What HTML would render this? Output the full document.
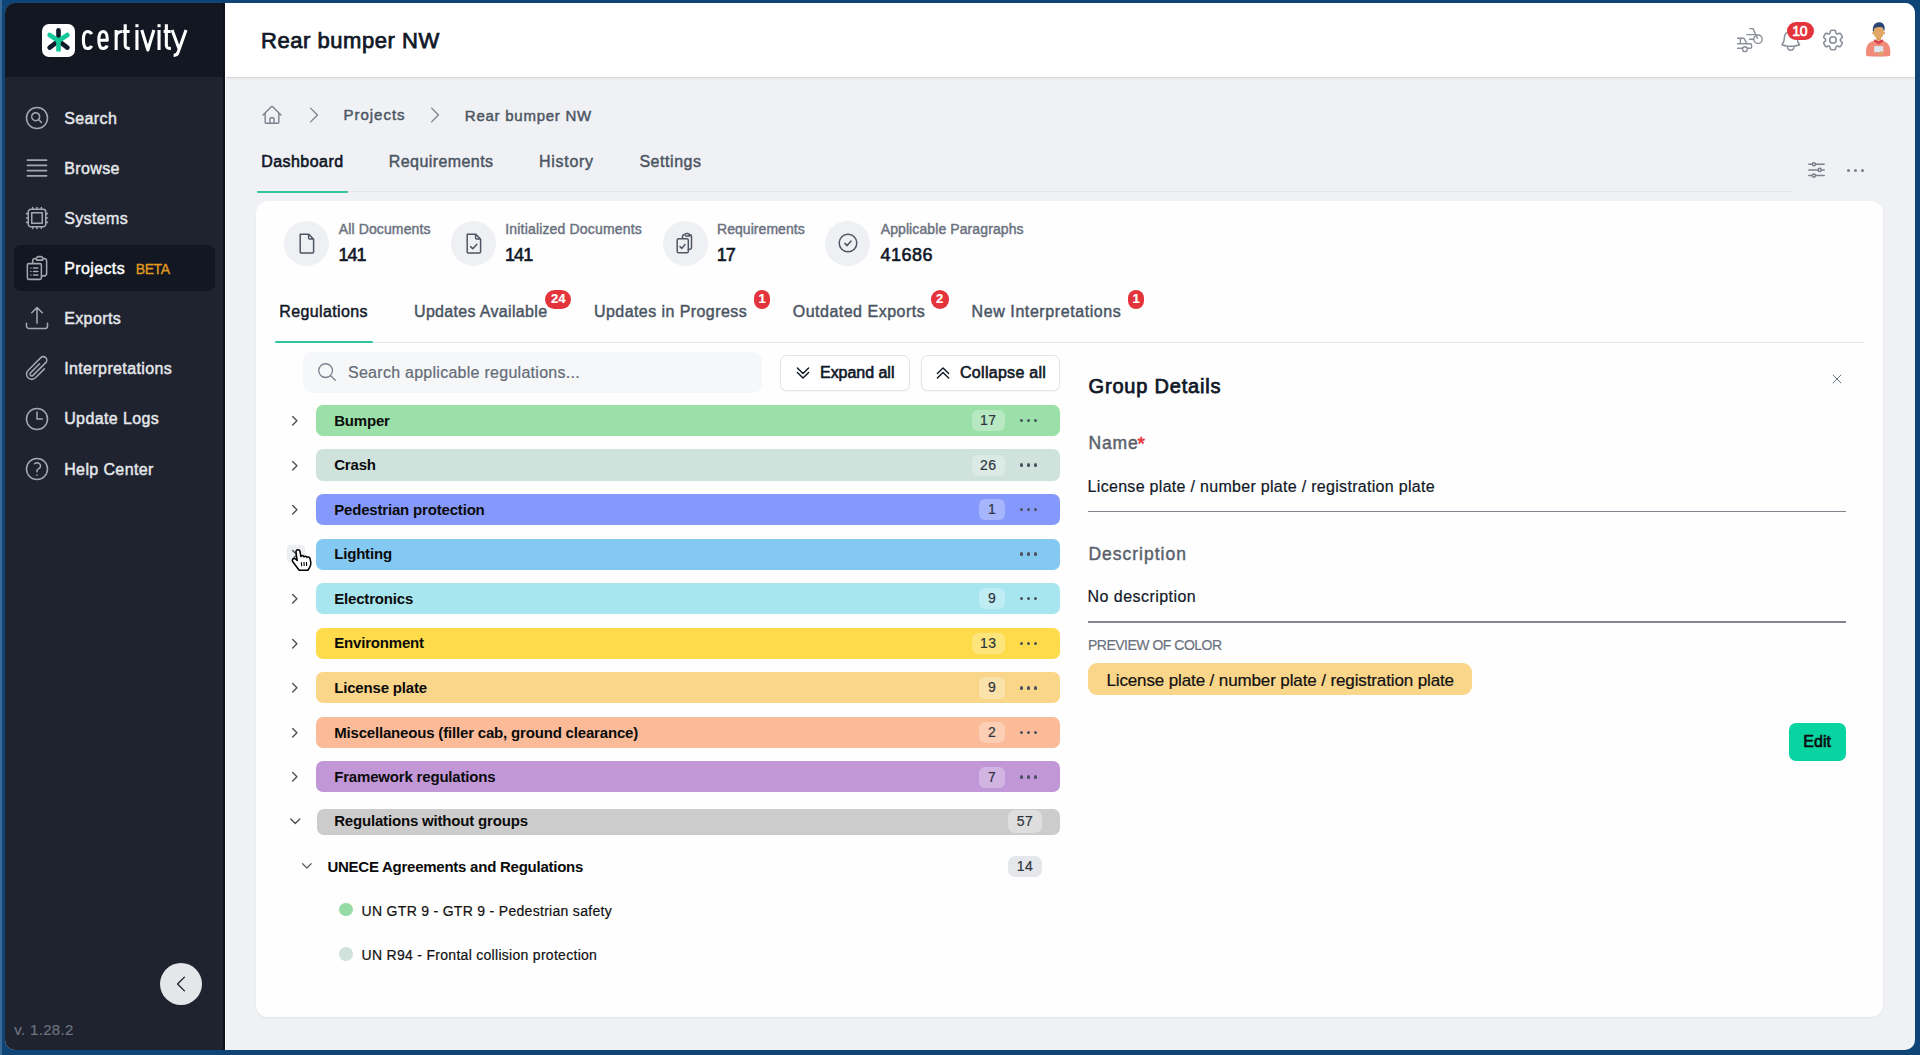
<!DOCTYPE html><html><head><meta charset="utf-8"><title>certivity</title><style>
html,body{margin:0;padding:0;}
body{width:1920px;height:1055px;overflow:hidden;position:relative;background:#0e4576;font-family:"Liberation Sans",sans-serif;}
.t{position:absolute;white-space:nowrap;line-height:1;-webkit-text-stroke:0.2px currentColor;}
.r{position:absolute;}
#win{position:absolute;left:0;top:0;width:1920px;height:1055px;clip-path:inset(3px 5px 5px 5px round 10px);background:#f0f1f4;}
</style></head><body>
<div class="r" style="left:0.0px;top:0.0px;width:1.5px;height:1055.0px;background:#3a6b98;border-radius:0px;"></div>
<div id="win">
<div class="r" style="left:5.0px;top:3.0px;width:220.0px;height:1047.0px;background:#1e232f;border-radius:0px;"></div>
<div class="r" style="left:5.0px;top:3.0px;width:220.0px;height:73.8px;background:#121721;border-radius:0px;"></div>
<div class="r" style="left:223.3px;top:3.0px;width:1.7px;height:1047.0px;background:#0d111a;border-radius:0px;"></div>
<div class="r" style="left:225.0px;top:77.0px;width:1.0px;height:973.0px;background:#ffffff;border-radius:0px;"></div>
<div class="r" style="left:42.0px;top:24.0px;width:33.0px;height:32.5px;background:#ffffff;border-radius:7px;"></div>
<svg class="r" style="left:42.0px;top:24.0px;width:33px;height:32.5px;" viewBox="0 0 33 32.5">
<g stroke-linecap="round" stroke-width="4.6">
<line x1="16.5" y1="16.8" x2="16.5" y2="6.2" stroke="#0f1c2b"/>
<line x1="16.5" y1="16.8" x2="7.6" y2="23.6" stroke="#0f1c2b"/>
<line x1="16.5" y1="16.8" x2="25.4" y2="23.6" stroke="#0f1c2b"/>
<line x1="16.5" y1="16.8" x2="7.6" y2="11.0" stroke="#12c99a"/>
<line x1="16.5" y1="16.8" x2="25.4" y2="11.0" stroke="#12c99a"/>
<line x1="16.5" y1="16.8" x2="16.5" y2="27.5" stroke="#12c99a" stroke-linecap="butt"/>
</g></svg>
<svg class="r" style="left:75.0px;top:20.0px;width:120px;height:40px;" viewBox="75 20 120 40"><g fill="none" stroke="#ffffff" stroke-width="3.1" stroke-linecap="butt" stroke-linejoin="round">
<path d="M91.6 34.2 C90.8 32.2 89.4 31.55 87.4 31.55 C84.3 31.55 83.4 34 83.4 40 C83.4 46 84.3 48.45 87.4 48.45 C89.4 48.45 90.8 47.8 91.6 45.8"/>
<path d="M98.85 40.3 H107.25 V39.5 C107.25 33.8 106 31.55 103.05 31.55 C100.1 31.55 98.85 33.8 98.85 40 C98.85 46.2 100.1 48.45 103.05 48.45 C105.2 48.45 106.5 47.6 107.2 45.6"/>
<path d="M116.15 30 V50 M116.15 36.5 C116.6 33 118.3 31.55 122.1 31.55"/>
<path d="M125.2 24.2 V45 C125.2 47.6 126.3 48.45 129.8 48.45 M122.5 31.55 H129.6"/>
<path d="M136.95 30 V50"/>
<path d="M141.8 30 L147.85 50 L153.9 30"/>
<path d="M159.05 30 V50"/>
<path d="M166.35 24.2 V45 C166.35 47.6 167.45 48.45 170.9 48.45 M163.6 31.55 H170.7"/>
<path d="M172.1 30 L179.2 49.2 M186.0 30 L178.0 52.6 C177.2 54.9 176.1 55.5 173.6 55.4"/>
</g>
<rect x="135.4" y="24.2" width="3.1" height="3" fill="#fff"/>
<rect x="157.5" y="24.2" width="3.1" height="3" fill="#fff"/></svg>
<div class="r" style="left:14.2px;top:245.3px;width:200.8px;height:45.7px;background:#121722;border-radius:7px;"></div>
<svg class="r" style="left:23.2px;top:103.6px;width:28px;height:28px;" viewBox="0 0 24 24"><path d="m15.75 15.75-2.489-2.489m0 0a3.375 3.375 0 1 0-4.773-4.773 3.375 3.375 0 0 0 4.774 4.774ZM21 12a9 9 0 1 1-18 0 9 9 0 0 1 18 0Z" fill="none" stroke="#a3a7b0" stroke-width="1.3" stroke-linecap="round" stroke-linejoin="round"/></svg>
<div class="t" style="left:64.2px;top:111.0px;font-size:16px;color:#e5e7eb;font-weight:normal;letter-spacing:0.38px;-webkit-text-stroke:0.45px #e5e7eb;">Search</div>
<svg class="r" style="left:23.2px;top:153.8px;width:28px;height:28px;" viewBox="0 0 24 24"><path d="M3.75 5.25h16.5m-16.5 4.5h16.5m-16.5 4.5h16.5m-16.5 4.5h16.5" fill="none" stroke="#a3a7b0" stroke-width="1.3" stroke-linecap="round" stroke-linejoin="round"/></svg>
<div class="t" style="left:64.2px;top:161.0px;font-size:16px;color:#e5e7eb;font-weight:normal;letter-spacing:0.38px;-webkit-text-stroke:0.45px #e5e7eb;">Browse</div>
<svg class="r" style="left:23.2px;top:203.9px;width:28px;height:28px;" viewBox="0 0 24 24"><path d="M8.25 3v1.5M4.5 8.25H3m18 0h-1.5M4.5 12H3m18 0h-1.5m-15 3.75H3m18 0h-1.5M8.25 19.5V21M12 3v1.5m0 15V21m3.75-18v1.5m0 15V21m-9-1.5h10.5a2.25 2.25 0 0 0 2.25-2.25V6.75a2.25 2.25 0 0 0-2.25-2.25H6.75A2.25 2.25 0 0 0 4.5 6.75v10.5a2.25 2.25 0 0 0 2.25 2.25Zm.75-12h9v9h-9v-9Z" fill="none" stroke="#a3a7b0" stroke-width="1.3" stroke-linecap="round" stroke-linejoin="round"/></svg>
<div class="t" style="left:64.2px;top:211.0px;font-size:16px;color:#e5e7eb;font-weight:normal;letter-spacing:0.38px;-webkit-text-stroke:0.45px #e5e7eb;">Systems</div>
<svg class="r" style="left:23.2px;top:254.0px;width:28px;height:28px;" viewBox="0 0 24 24"><path d="M9 12h3.75M9 15h3.75M9 18h3.75m3 .75H18a2.25 2.25 0 0 0 2.25-2.25V6.108c0-1.135-.845-2.098-1.976-2.192a48.424 48.424 0 0 0-1.123-.08m-5.801 0c-.065.21-.1.433-.1.664 0 .414.336.75.75.75h4.5a.75.75 0 0 0 .75-.75 2.25 2.25 0 0 0-.1-.664m-5.8 0A2.251 2.251 0 0 1 13.5 2.25H15c1.012 0 1.867.668 2.15 1.586m-5.8 0c-.376.023-.75.05-1.124.08C9.095 4.01 8.25 4.973 8.25 6.108V8.25m0 0H4.875c-.621 0-1.125.504-1.125 1.125v11.25c0 .621.504 1.125 1.125 1.125h9.75c.621 0 1.125-.504 1.125-1.125V9.375c0-.621-.504-1.125-1.125-1.125H8.25ZM6.75 12h.008v.008H6.75V12Zm0 3h.008v.008H6.75V15Zm0 3h.008v.008H6.75V18Z" fill="none" stroke="#a3a7b0" stroke-width="1.3" stroke-linecap="round" stroke-linejoin="round"/></svg>
<div class="t" style="left:64.2px;top:261.0px;font-size:16px;color:#ffffff;font-weight:normal;letter-spacing:0.38px;-webkit-text-stroke:0.45px #ffffff;">Projects</div>
<svg class="r" style="left:23.2px;top:304.2px;width:28px;height:28px;" viewBox="0 0 24 24"><path d="M3 16.5v2.25A2.25 2.25 0 0 0 5.25 21h13.5A2.25 2.25 0 0 0 21 18.75V16.5m-13.5-9L12 3m0 0 4.5 4.5M12 3v13.5" fill="none" stroke="#a3a7b0" stroke-width="1.3" stroke-linecap="round" stroke-linejoin="round"/></svg>
<div class="t" style="left:64.2px;top:311.0px;font-size:16px;color:#e5e7eb;font-weight:normal;letter-spacing:0.38px;-webkit-text-stroke:0.45px #e5e7eb;">Exports</div>
<svg class="r" style="left:23.2px;top:354.4px;width:28px;height:28px;" viewBox="0 0 24 24"><path d="m18.375 12.739-7.693 7.693a4.5 4.5 0 0 1-6.364-6.364l10.94-10.94A3 3 0 1 1 19.5 7.372L8.552 18.32m.009-.01-.01.01m5.699-9.941-7.81 7.81a1.5 1.5 0 0 0 2.112 2.13" fill="none" stroke="#a3a7b0" stroke-width="1.3" stroke-linecap="round" stroke-linejoin="round"/></svg>
<div class="t" style="left:64.2px;top:361.0px;font-size:16px;color:#e5e7eb;font-weight:normal;letter-spacing:0.38px;-webkit-text-stroke:0.45px #e5e7eb;">Interpretations</div>
<svg class="r" style="left:23.2px;top:404.5px;width:28px;height:28px;" viewBox="0 0 24 24"><path d="M12 6v6h4.5m4.5 0a9 9 0 1 1-18 0 9 9 0 0 1 18 0Z" fill="none" stroke="#a3a7b0" stroke-width="1.3" stroke-linecap="round" stroke-linejoin="round"/></svg>
<div class="t" style="left:64.2px;top:411.0px;font-size:16px;color:#e5e7eb;font-weight:normal;letter-spacing:0.38px;-webkit-text-stroke:0.45px #e5e7eb;">Update Logs</div>
<svg class="r" style="left:23.2px;top:454.6px;width:28px;height:28px;" viewBox="0 0 24 24"><path d="M9.879 7.519c1.171-1.025 3.071-1.025 4.242 0 1.172 1.025 1.172 2.687 0 3.712-.203.179-.43.326-.67.442-.745.361-1.45.999-1.45 1.827v.75M21 12a9 9 0 1 1-18 0 9 9 0 0 1 18 0Zm-9 5.25h.008v.008H12v-.008Z" fill="none" stroke="#a3a7b0" stroke-width="1.3" stroke-linecap="round" stroke-linejoin="round"/></svg>
<div class="t" style="left:64.2px;top:462.0px;font-size:16px;color:#e5e7eb;font-weight:normal;letter-spacing:0.38px;-webkit-text-stroke:0.45px #e5e7eb;">Help Center</div>
<div class="t" style="left:135.8px;top:262.0px;font-size:14px;color:#e09a1e;font-weight:normal;letter-spacing:-0.45px;-webkit-text-stroke:0.35px #e09a1e;">BETA</div>
<div class="r" style="left:160.2px;top:962.5px;width:42.0px;height:42.0px;background:#e4e6ea;border-radius:21px;"></div>
<svg class="r" style="left:170.2px;top:972.5px;width:22px;height:22px;" viewBox="0 0 24 24"><path d="M15.75 19.5 8.25 12l7.5-7.5" fill="none" stroke="#1f2330" stroke-width="1.5" stroke-linecap="round" stroke-linejoin="round"/></svg>
<div class="t" style="left:14.2px;top:1022.0px;font-size:15px;color:#6f7480;font-weight:normal;letter-spacing:0.35px;">v. 1.28.2</div>
<div class="r" style="left:225.0px;top:3.0px;width:1690.0px;height:73.8px;background:#ffffff;border-radius:0px;"></div>
<div class="r" style="left:226.0px;top:76.8px;width:1689.0px;height:1.0px;background:#d9dadd;border-radius:0px;"></div>
<div class="r" style="left:226.0px;top:77.8px;width:1689.0px;height:2.0px;background:linear-gradient(#e5e6e9,#f0f1f4);border-radius:0px;"></div>
<div class="t" style="left:261.0px;top:30.0px;font-size:22px;color:#111827;font-weight:normal;letter-spacing:0.55px;-webkit-text-stroke:0.75px #111827;">Rear bumper NW</div>
<svg class="r" style="left:1778.0px;top:27.9px;width:25.5px;height:25.5px;" viewBox="0 0 24 24"><path d="M14.857 17.082a23.848 23.848 0 0 0 5.454-1.31A8.967 8.967 0 0 1 18 9.75V9A6 6 0 0 0 6 9v.75a8.967 8.967 0 0 1-2.312 6.022c1.733.64 3.56 1.085 5.455 1.31m5.714 0a24.255 24.255 0 0 1-5.714 0m5.714 0a3 3 0 1 1-5.714 0" fill="none" stroke="#8a909b" stroke-width="1.4" stroke-linecap="round" stroke-linejoin="round"/></svg>
<div class="r" style="left:1786.7px;top:22.0px;width:27.7px;height:18.3px;background:#e4343b;border-radius:10px;"></div>
<div class="t" style="left:1792.2px;top:24.0px;font-size:14px;color:#ffffff;font-weight:normal;letter-spacing:-0.30px;-webkit-text-stroke:0.6px #ffffff;">10</div>
<svg class="r" style="left:1819.6px;top:27.0px;width:26px;height:26px;" viewBox="0 0 24 24"><path d="M9.594 3.94c.09-.542.56-.94 1.11-.94h2.593c.55 0 1.02.398 1.11.94l.213 1.281c.063.374.313.686.645.87.074.04.147.083.22.127.325.196.72.257 1.075.124l1.217-.456a1.125 1.125 0 0 1 1.37.49l1.296 2.247a1.125 1.125 0 0 1-.26 1.431l-1.003.827c-.293.241-.438.613-.43.992a7.723 7.723 0 0 1 0 .255c-.008.378.137.75.43.991l1.004.827c.424.35.534.955.26 1.43l-1.298 2.247a1.125 1.125 0 0 1-1.369.491l-1.217-.456c-.355-.133-.75-.072-1.076.124a6.47 6.47 0 0 1-.22.128c-.331.183-.581.495-.644.869l-.213 1.281c-.09.543-.56.94-1.11.94h-2.594c-.55 0-1.019-.398-1.11-.94l-.213-1.281c-.062-.374-.312-.686-.644-.87a6.52 6.52 0 0 1-.22-.127c-.325-.196-.72-.257-1.076-.124l-1.217.456a1.125 1.125 0 0 1-1.369-.49l-1.297-2.247a1.125 1.125 0 0 1 .26-1.431l1.004-.827c.292-.24.437-.613.43-.991a6.932 6.932 0 0 1 0-.255c.007-.38-.138-.751-.43-.992l-1.004-.827a1.125 1.125 0 0 1-.26-1.43l1.297-2.247a1.125 1.125 0 0 1 1.37-.491l1.216.456c.356.133.751.072 1.076-.124.072-.044.146-.086.22-.128.332-.183.582-.495.644-.869l.214-1.28Z M15 12a3 3 0 1 1-6 0 3 3 0 0 1 6 0Z" fill="none" stroke="#8a909b" stroke-width="1.5" stroke-linecap="round" stroke-linejoin="round"/></svg>
<svg class="r" style="left:1734.0px;top:24.0px;width:32px;height:32px;" viewBox="0 0 32 32">
<g fill="none" stroke="#8a909b" stroke-width="1.4" stroke-linecap="round" stroke-linejoin="round">
<path d="M15.8 4.6h3.2l4.4 9.7"/>
<path d="M12.7 10.6h9.1"/>
<circle cx="24" cy="15.2" r="4.2"/>
<path d="M15.5 15.3h3.9"/>
<path d="M3.6 14.3h6.4l2.7 5.1"/>
<path d="M6.4 14.3v5.1"/>
<path d="M3.6 19.7h12.6c.8 0 1.4.6 1.4 1.4v1.8c0 .8-.6 1.4-1.4 1.4h-2.9"/>
<path d="M3.6 24.3h4.9"/>
<circle cx="10.9" cy="25.2" r="2.4"/>
</g></svg>
<svg class="r" style="left:1864.0px;top:21.0px;width:30px;height:38px;" viewBox="0 0 30 38">
<rect x="10" y="34.6" width="9.5" height="1.6" fill="#e6eef6"/>
<path d="M2.3 35.0 C1.8 31 2 26.5 3.5 24 C5 21.3 8 20 11 19.5 L17.5 19.5 C20.5 20 23.4 21.3 24.8 24 C26.3 26.5 26.6 31 26.1 35.0 C20 35.8 8 35.8 2.3 35.0 Z" fill="#f28a79"/>
<rect x="12.3" y="15.5" width="4.6" height="4" fill="#d89c5e"/>
<path d="M10.2 18.3 L14.6 20.2 L19 18.3 L19.2 20.6 L14.6 23.3 L10 20.6 Z" fill="#d8404b"/>
<circle cx="9.3" cy="12.2" r="1.1" fill="#d99c5c"/>
<circle cx="19.9" cy="12.2" r="1.1" fill="#d99c5c"/>
<path d="M9.4 10.5 C9.4 6.8 11.6 5.0 14.6 5.0 C17.6 5.0 19.8 6.8 19.8 10.5 C19.8 14.8 17.5 17.6 14.6 17.6 C11.7 17.6 9.4 14.8 9.4 10.5 Z" fill="#e0a765"/>
<path d="M8.9 10.2 C8.4 5 10.8 1.2 15 1.2 C18.8 1.2 21.2 3.6 20.6 9.6 L19.7 9.8 C19.6 7.4 18.6 6.0 16.8 5.9 C14.2 5.9 11.8 6.3 10.2 7.4 L9.8 10.4 Z" fill="#2b4676"/>
<rect x="10.2" y="25.1" width="9.1" height="6.1" fill="#dde7f1"/>
<path d="M14.8 32.8 C15 30.4 17.4 29.6 18.6 30.6 L19.0 34.6 L15.2 34.6 Z" fill="#dfa466"/>
</svg>
<svg class="r" style="left:261.2px;top:104.0px;width:22px;height:22px;" viewBox="0 0 24 24"><path d="m2.25 12 8.954-8.955c.44-.439 1.152-.439 1.591 0L21.75 12M4.5 9.75v10.125c0 .621.504 1.125 1.125 1.125H9.75v-4.875c0-.621.504-1.125 1.125-1.125h2.25c.621 0 1.125.504 1.125 1.125V21h4.125c.621 0 1.125-.504 1.125-1.125V9.75M8.25 21h8.25" fill="none" stroke="#7b818c" stroke-width="1.5" stroke-linecap="round" stroke-linejoin="round"/></svg>
<svg class="r" style="left:302.5px;top:104.3px;width:22px;height:22px;" viewBox="0 0 24 24"><path d="m8.25 4.5 7.5 7.5-7.5 7.5" fill="none" stroke="#7b818c" stroke-width="1.4" stroke-linecap="round" stroke-linejoin="round"/></svg>
<div class="t" style="left:343.4px;top:107.0px;font-size:15px;color:#4b5563;font-weight:normal;letter-spacing:1.00px;-webkit-text-stroke:0.45px #4b5563;">Projects</div>
<svg class="r" style="left:423.8px;top:104.3px;width:22px;height:22px;" viewBox="0 0 24 24"><path d="m8.25 4.5 7.5 7.5-7.5 7.5" fill="none" stroke="#7b818c" stroke-width="1.4" stroke-linecap="round" stroke-linejoin="round"/></svg>
<div class="t" style="left:464.8px;top:108.0px;font-size:15px;color:#4b5563;font-weight:normal;letter-spacing:0.75px;-webkit-text-stroke:0.45px #4b5563;">Rear bumper NW</div>
<div class="r" style="left:256.0px;top:191.0px;width:1536.0px;height:1.0px;background:#e3e5e8;border-radius:0px;"></div>
<div class="r" style="left:256.5px;top:190.8px;width:91.5px;height:2.0px;background:#2ec59f;border-radius:1px;"></div>
<div class="t" style="left:261.2px;top:154.0px;font-size:16px;color:#111827;font-weight:normal;letter-spacing:0.45px;-webkit-text-stroke:0.6px #111827;">Dashboard</div>
<div class="t" style="left:388.8px;top:154.0px;font-size:16px;color:#4b5563;font-weight:normal;letter-spacing:0.42px;-webkit-text-stroke:0.45px #4b5563;">Requirements</div>
<div class="t" style="left:539.0px;top:154.0px;font-size:16px;color:#4b5563;font-weight:normal;letter-spacing:0.72px;-webkit-text-stroke:0.45px #4b5563;">History</div>
<div class="t" style="left:639.4px;top:154.0px;font-size:16px;color:#4b5563;font-weight:normal;letter-spacing:0.55px;-webkit-text-stroke:0.45px #4b5563;">Settings</div>
<svg class="r" style="left:1806.0px;top:160.0px;width:21px;height:20px;" viewBox="0 0 21 20"><g fill="none" stroke="#7b818c" stroke-width="1.5" stroke-linecap="round"><path d="M2.8 4.2h2.9M10.1 4.2h8.1M2.8 9.9h8.7M15.9 9.9h2.3M2.8 15.6h2.9M10.1 15.6h8.1"/><circle cx="7.9" cy="4.2" r="1.55"/><circle cx="13.7" cy="9.9" r="1.55"/><circle cx="7.9" cy="15.6" r="1.55"/></g></svg>
<div class="r" style="left:1847.0px;top:169.0px;width:3.2px;height:3.2px;background:#7b818c;border-radius:2px;"></div>
<div class="r" style="left:1853.8px;top:169.0px;width:3.2px;height:3.2px;background:#7b818c;border-radius:2px;"></div>
<div class="r" style="left:1860.6px;top:169.0px;width:3.2px;height:3.2px;background:#7b818c;border-radius:2px;"></div>
<div class="r" style="left:256.0px;top:201.4px;width:1627.0px;height:815.9px;background:#fefefe;border-radius:12px;box-shadow:0 1px 2px rgba(0,0,0,0.06);"></div>
<div class="r" style="left:284.1px;top:220.8px;width:45.0px;height:45.0px;background:#eff0f3;border-radius:23px;"></div>
<div class="t" style="left:338.7px;top:222.0px;font-size:14px;color:#6b7280;font-weight:normal;letter-spacing:0.13px;-webkit-text-stroke:0.45px #6b7280;">All Documents</div>
<div class="t" style="left:338.4px;top:246.0px;font-size:18px;color:#111827;font-weight:normal;letter-spacing:-0.90px;-webkit-text-stroke:0.6px #111827;">141</div>
<div class="r" style="left:451.0px;top:220.8px;width:45.0px;height:45.0px;background:#eff0f3;border-radius:23px;"></div>
<div class="t" style="left:505.3px;top:222.0px;font-size:14px;color:#6b7280;font-weight:normal;letter-spacing:0.17px;-webkit-text-stroke:0.45px #6b7280;">Initialized Documents</div>
<div class="t" style="left:505.0px;top:246.0px;font-size:18px;color:#111827;font-weight:normal;letter-spacing:-0.90px;-webkit-text-stroke:0.6px #111827;">141</div>
<div class="r" style="left:662.6px;top:220.8px;width:45.0px;height:45.0px;background:#eff0f3;border-radius:23px;"></div>
<div class="t" style="left:717.0px;top:222.0px;font-size:14px;color:#6b7280;font-weight:normal;letter-spacing:0.05px;-webkit-text-stroke:0.45px #6b7280;">Requirements</div>
<div class="t" style="left:716.7px;top:246.0px;font-size:18px;color:#111827;font-weight:normal;letter-spacing:-1.00px;-webkit-text-stroke:0.6px #111827;">17</div>
<div class="r" style="left:825.1px;top:220.8px;width:45.0px;height:45.0px;background:#eff0f3;border-radius:23px;"></div>
<div class="t" style="left:880.7px;top:222.0px;font-size:14px;color:#6b7280;font-weight:normal;letter-spacing:0.10px;-webkit-text-stroke:0.45px #6b7280;">Applicable Paragraphs</div>
<div class="t" style="left:880.4px;top:246.0px;font-size:18px;color:#111827;font-weight:normal;letter-spacing:0.50px;-webkit-text-stroke:0.6px #111827;">41686</div>
<svg class="r" style="left:297.0px;top:231.0px;width:20px;height:24px;" viewBox="0 0 20 24"><path d="M3.2 3.2h8.6l4.8 5v12.6c0 .7-.5 1.2-1.2 1.2H4.4c-.7 0-1.2-.5-1.2-1.2V4.4c0-.7.5-1.2 1.2-1.2Z M11.6 3.4v3.6c0 .6.4 1 1 1h3.8" fill="none" stroke="#4e5663" stroke-width="1.5" stroke-linejoin="round"/></svg>
<svg class="r" style="left:464.0px;top:231.0px;width:20px;height:24px;" viewBox="0 0 20 24"><path d="M3.2 3.2h8.6l4.8 5v12.6c0 .7-.5 1.2-1.2 1.2H4.4c-.7 0-1.2-.5-1.2-1.2V4.4c0-.7.5-1.2 1.2-1.2Z M11.6 3.4v3.6c0 .6.4 1 1 1h3.8 M6.6 15.6l2.2 2.2 4-4.6" fill="none" stroke="#4e5663" stroke-width="1.5" stroke-linejoin="round" stroke-linecap="round"/></svg>
<svg class="r" style="left:673.0px;top:231.0px;width:24px;height:24px;" viewBox="0 0 24 24"><path d="M9.5 7.5V5.3c0-.9.7-1.6 1.6-1.6h.6c.2-.8.9-1.3 1.7-1.3h1.2c.8 0 1.5.5 1.7 1.3h.6c.9 0 1.6.7 1.6 1.6v11.4c0 .9-.7 1.6-1.6 1.6h-1.9 M12.6 4.9h4.2 M5.6 7.8h8.3c.8 0 1.4.6 1.4 1.4v11.2c0 .8-.6 1.4-1.4 1.4H5.6c-.8 0-1.4-.6-1.4-1.4V9.2c0-.8.6-1.4 1.4-1.4Z M7 15.6l1.8 1.8 3.2-3.8" fill="none" stroke="#4e5663" stroke-width="1.5" stroke-linejoin="round" stroke-linecap="round"/></svg>
<svg class="r" style="left:835.6px;top:231.3px;width:24px;height:24px;" viewBox="0 0 24 24"><circle cx="12" cy="12" r="8.8" fill="none" stroke="#4e5663" stroke-width="1.5"/><path d="M8.9 12.4l2.2 2.2 4-4.6" fill="none" stroke="#4e5663" stroke-width="1.5" stroke-linecap="round" stroke-linejoin="round"/></svg>
<div class="r" style="left:275.0px;top:341.6px;width:1589.4px;height:1.0px;background:#e7e8eb;border-radius:0px;"></div>
<div class="r" style="left:275.2px;top:340.6px;width:97.9px;height:2.0px;background:#2ec59f;border-radius:1px;"></div>
<div class="t" style="left:279.3px;top:304.0px;font-size:16px;color:#111827;font-weight:normal;letter-spacing:0.38px;-webkit-text-stroke:0.45px #111827;">Regulations</div>
<div class="t" style="left:414.0px;top:304.0px;font-size:16px;color:#4b5563;font-weight:normal;letter-spacing:0.33px;-webkit-text-stroke:0.45px #4b5563;">Updates Available</div>
<div class="t" style="left:594.0px;top:304.0px;font-size:16px;color:#4b5563;font-weight:normal;letter-spacing:0.43px;-webkit-text-stroke:0.45px #4b5563;">Updates in Progress</div>
<div class="t" style="left:792.7px;top:304.0px;font-size:16px;color:#4b5563;font-weight:normal;letter-spacing:0.50px;-webkit-text-stroke:0.45px #4b5563;">Outdated Exports</div>
<div class="t" style="left:971.6px;top:304.0px;font-size:16px;color:#4b5563;font-weight:normal;letter-spacing:0.58px;-webkit-text-stroke:0.45px #4b5563;">New Interpretations</div>
<div class="r" style="left:545.3px;top:290.2px;width:26.1px;height:18.8px;background:#e4343b;border-radius:10px;"></div>
<div class="t" style="left:545.3px;top:290.2px;width:26.1px;height:18.8px;line-height:18.8px;text-align:center;font-size:13px;font-weight:bold;color:#fff;">24</div>
<div class="r" style="left:754.2px;top:290.3px;width:15.9px;height:18.6px;background:#e4343b;border-radius:10px;"></div>
<div class="t" style="left:754.2px;top:290.3px;width:15.9px;height:18.6px;line-height:18.6px;text-align:center;font-size:13px;font-weight:bold;color:#fff;">1</div>
<div class="r" style="left:930.6px;top:290.4px;width:18.2px;height:18.2px;background:#e4343b;border-radius:10px;"></div>
<div class="t" style="left:930.6px;top:290.4px;width:18.2px;height:18.2px;line-height:18.2px;text-align:center;font-size:13px;font-weight:bold;color:#fff;">2</div>
<div class="r" style="left:1127.7px;top:290.4px;width:16.8px;height:18.2px;background:#e4343b;border-radius:10px;"></div>
<div class="t" style="left:1127.7px;top:290.4px;width:16.8px;height:18.2px;line-height:18.2px;text-align:center;font-size:13px;font-weight:bold;color:#fff;">1</div>
<div class="r" style="left:302.5px;top:352.0px;width:459.0px;height:41.4px;background:#f6f7f9;border-radius:9px;"></div>
<svg class="r" style="left:316.0px;top:361.3px;width:22px;height:22px;" viewBox="0 0 24 24"><path d="m21 21-5.197-5.197m0 0A7.5 7.5 0 1 0 5.196 5.196a7.5 7.5 0 0 0 10.607 10.607Z" fill="none" stroke="#7b818c" stroke-width="1.4" stroke-linecap="round" stroke-linejoin="round"/></svg>
<div class="t" style="left:348.0px;top:365.0px;font-size:16px;color:#646b77;font-weight:normal;letter-spacing:0.27px;">Search applicable regulations...</div>
<div class="r" style="left:780.4px;top:354.5px;width:129.8px;height:36.9px;background:#ffffff;border-radius:7px;box-sizing:border-box;border:1px solid #e3e5e8;box-shadow:0 1px 2px rgba(0,0,0,0.05);"></div>
<svg class="r" style="left:794.2px;top:363.5px;width:18px;height:18px;" viewBox="0 0 24 24"><path d="m4.5 5.25 7.5 7.5 7.5-7.5m-15 6 7.5 7.5 7.5-7.5" fill="none" stroke="#111827" stroke-width="1.9" stroke-linecap="round" stroke-linejoin="round"/></svg>
<div class="t" style="left:820.0px;top:365.0px;font-size:16px;color:#111827;font-weight:normal;letter-spacing:-0.03px;-webkit-text-stroke:0.6px #111827;">Expand all</div>
<div class="r" style="left:920.5px;top:354.5px;width:139.2px;height:36.9px;background:#ffffff;border-radius:7px;box-sizing:border-box;border:1px solid #e3e5e8;box-shadow:0 1px 2px rgba(0,0,0,0.05);"></div>
<svg class="r" style="left:934.3px;top:363.5px;width:18px;height:18px;" viewBox="0 0 24 24"><path d="m4.5 18.75 7.5-7.5 7.5 7.5m-15-6 7.5-7.5 7.5 7.5" fill="none" stroke="#111827" stroke-width="1.9" stroke-linecap="round" stroke-linejoin="round"/></svg>
<div class="t" style="left:960.0px;top:365.0px;font-size:16px;color:#111827;font-weight:normal;letter-spacing:0.29px;-webkit-text-stroke:0.6px #111827;">Collapse all</div>
<div class="r" style="left:316.3px;top:404.8px;width:743.7px;height:31.2px;background:#9be0a9;border-radius:7px;"></div>
<svg class="r" style="left:288.4px;top:413.9px;width:13.6px;height:13.6px;" viewBox="0 0 24 24"><path d="m8.25 4.5 7.5 7.5-7.5 7.5" fill="none" stroke="#525252" stroke-width="2.5" stroke-linecap="round" stroke-linejoin="round"/></svg>
<div class="t" style="left:334.2px;top:413.0px;font-size:15px;color:#0b0b0b;font-weight:bold;letter-spacing:-0.18px;-webkit-text-stroke:0;">Bumper</div>
<div class="r" style="left:971.7px;top:410.0px;width:33.3px;height:21.3px;background:rgba(255,255,255,0.28);border-radius:6px;"></div>
<div class="t" style="left:971.7px;top:410.0px;width:33.3px;height:21.3px;line-height:21.3px;text-align:center;font-size:14px;color:#2e3540;letter-spacing:0.5px;">17</div>
<div class="r" style="left:1019.5px;top:418.6px;width:3.5px;height:3.5px;background:#4a515c;border-radius:2px;"></div>
<div class="r" style="left:1026.5px;top:418.6px;width:3.5px;height:3.5px;background:#4a515c;border-radius:2px;"></div>
<div class="r" style="left:1033.5px;top:418.6px;width:3.5px;height:3.5px;background:#4a515c;border-radius:2px;"></div>
<div class="r" style="left:316.3px;top:449.4px;width:743.7px;height:31.2px;background:#cfe2dc;border-radius:7px;"></div>
<svg class="r" style="left:288.4px;top:458.5px;width:13.6px;height:13.6px;" viewBox="0 0 24 24"><path d="m8.25 4.5 7.5 7.5-7.5 7.5" fill="none" stroke="#525252" stroke-width="2.5" stroke-linecap="round" stroke-linejoin="round"/></svg>
<div class="t" style="left:334.2px;top:457.0px;font-size:15px;color:#0b0b0b;font-weight:bold;letter-spacing:-0.18px;-webkit-text-stroke:0;">Crash</div>
<div class="r" style="left:971.7px;top:454.6px;width:33.3px;height:21.3px;background:rgba(255,255,255,0.28);border-radius:6px;"></div>
<div class="t" style="left:971.7px;top:454.6px;width:33.3px;height:21.3px;line-height:21.3px;text-align:center;font-size:14px;color:#2e3540;letter-spacing:0.5px;">26</div>
<div class="r" style="left:1019.5px;top:463.2px;width:3.5px;height:3.5px;background:#4a515c;border-radius:2px;"></div>
<div class="r" style="left:1026.5px;top:463.2px;width:3.5px;height:3.5px;background:#4a515c;border-radius:2px;"></div>
<div class="r" style="left:1033.5px;top:463.2px;width:3.5px;height:3.5px;background:#4a515c;border-radius:2px;"></div>
<div class="r" style="left:316.3px;top:493.9px;width:743.7px;height:31.2px;background:#8499fb;border-radius:7px;"></div>
<svg class="r" style="left:288.4px;top:503.0px;width:13.6px;height:13.6px;" viewBox="0 0 24 24"><path d="m8.25 4.5 7.5 7.5-7.5 7.5" fill="none" stroke="#525252" stroke-width="2.5" stroke-linecap="round" stroke-linejoin="round"/></svg>
<div class="t" style="left:334.2px;top:502.0px;font-size:15px;color:#0b0b0b;font-weight:bold;letter-spacing:-0.18px;-webkit-text-stroke:0;">Pedestrian protection</div>
<div class="r" style="left:979.4px;top:499.1px;width:25.6px;height:21.3px;background:rgba(255,255,255,0.28);border-radius:6px;"></div>
<div class="t" style="left:979.4px;top:499.1px;width:25.6px;height:21.3px;line-height:21.3px;text-align:center;font-size:14px;color:#2e3540;letter-spacing:0.5px;">1</div>
<div class="r" style="left:1019.5px;top:507.8px;width:3.5px;height:3.5px;background:#4a515c;border-radius:2px;"></div>
<div class="r" style="left:1026.5px;top:507.8px;width:3.5px;height:3.5px;background:#4a515c;border-radius:2px;"></div>
<div class="r" style="left:1033.5px;top:507.8px;width:3.5px;height:3.5px;background:#4a515c;border-radius:2px;"></div>
<div class="r" style="left:316.3px;top:538.5px;width:743.7px;height:31.2px;background:#83c9f1;border-radius:7px;"></div>
<div class="t" style="left:334.2px;top:546.0px;font-size:15px;color:#0b0b0b;font-weight:bold;letter-spacing:-0.18px;-webkit-text-stroke:0;">Lighting</div>
<div class="r" style="left:1019.5px;top:552.3px;width:3.5px;height:3.5px;background:#4a515c;border-radius:2px;"></div>
<div class="r" style="left:1026.5px;top:552.3px;width:3.5px;height:3.5px;background:#4a515c;border-radius:2px;"></div>
<div class="r" style="left:1033.5px;top:552.3px;width:3.5px;height:3.5px;background:#4a515c;border-radius:2px;"></div>
<div class="r" style="left:316.3px;top:583.0px;width:743.7px;height:31.2px;background:#a8e6ef;border-radius:7px;"></div>
<svg class="r" style="left:288.4px;top:592.1px;width:13.6px;height:13.6px;" viewBox="0 0 24 24"><path d="m8.25 4.5 7.5 7.5-7.5 7.5" fill="none" stroke="#525252" stroke-width="2.5" stroke-linecap="round" stroke-linejoin="round"/></svg>
<div class="t" style="left:334.2px;top:591.0px;font-size:15px;color:#0b0b0b;font-weight:bold;letter-spacing:-0.18px;-webkit-text-stroke:0;">Electronics</div>
<div class="r" style="left:979.4px;top:588.2px;width:25.6px;height:21.3px;background:rgba(255,255,255,0.28);border-radius:6px;"></div>
<div class="t" style="left:979.4px;top:588.2px;width:25.6px;height:21.3px;line-height:21.3px;text-align:center;font-size:14px;color:#2e3540;letter-spacing:0.5px;">9</div>
<div class="r" style="left:1019.5px;top:596.9px;width:3.5px;height:3.5px;background:#4a515c;border-radius:2px;"></div>
<div class="r" style="left:1026.5px;top:596.9px;width:3.5px;height:3.5px;background:#4a515c;border-radius:2px;"></div>
<div class="r" style="left:1033.5px;top:596.9px;width:3.5px;height:3.5px;background:#4a515c;border-radius:2px;"></div>
<div class="r" style="left:316.3px;top:627.6px;width:743.7px;height:31.2px;background:#fddb4a;border-radius:7px;"></div>
<svg class="r" style="left:288.4px;top:636.7px;width:13.6px;height:13.6px;" viewBox="0 0 24 24"><path d="m8.25 4.5 7.5 7.5-7.5 7.5" fill="none" stroke="#525252" stroke-width="2.5" stroke-linecap="round" stroke-linejoin="round"/></svg>
<div class="t" style="left:334.2px;top:635.0px;font-size:15px;color:#0b0b0b;font-weight:bold;letter-spacing:-0.18px;-webkit-text-stroke:0;">Environment</div>
<div class="r" style="left:971.7px;top:632.8px;width:33.3px;height:21.3px;background:rgba(255,255,255,0.28);border-radius:6px;"></div>
<div class="t" style="left:971.7px;top:632.8px;width:33.3px;height:21.3px;line-height:21.3px;text-align:center;font-size:14px;color:#2e3540;letter-spacing:0.5px;">13</div>
<div class="r" style="left:1019.5px;top:641.5px;width:3.5px;height:3.5px;background:#4a515c;border-radius:2px;"></div>
<div class="r" style="left:1026.5px;top:641.5px;width:3.5px;height:3.5px;background:#4a515c;border-radius:2px;"></div>
<div class="r" style="left:1033.5px;top:641.5px;width:3.5px;height:3.5px;background:#4a515c;border-radius:2px;"></div>
<div class="r" style="left:316.3px;top:672.2px;width:743.7px;height:31.2px;background:#fad68a;border-radius:7px;"></div>
<svg class="r" style="left:288.4px;top:681.3px;width:13.6px;height:13.6px;" viewBox="0 0 24 24"><path d="m8.25 4.5 7.5 7.5-7.5 7.5" fill="none" stroke="#525252" stroke-width="2.5" stroke-linecap="round" stroke-linejoin="round"/></svg>
<div class="t" style="left:334.2px;top:680.0px;font-size:15px;color:#0b0b0b;font-weight:bold;letter-spacing:-0.18px;-webkit-text-stroke:0;">License plate</div>
<div class="r" style="left:979.4px;top:677.4px;width:25.6px;height:21.3px;background:rgba(255,255,255,0.28);border-radius:6px;"></div>
<div class="t" style="left:979.4px;top:677.4px;width:25.6px;height:21.3px;line-height:21.3px;text-align:center;font-size:14px;color:#2e3540;letter-spacing:0.5px;">9</div>
<div class="r" style="left:1019.5px;top:686.0px;width:3.5px;height:3.5px;background:#4a515c;border-radius:2px;"></div>
<div class="r" style="left:1026.5px;top:686.0px;width:3.5px;height:3.5px;background:#4a515c;border-radius:2px;"></div>
<div class="r" style="left:1033.5px;top:686.0px;width:3.5px;height:3.5px;background:#4a515c;border-radius:2px;"></div>
<div class="r" style="left:316.3px;top:716.7px;width:743.7px;height:31.2px;background:#fbbb98;border-radius:7px;"></div>
<svg class="r" style="left:288.4px;top:725.8px;width:13.6px;height:13.6px;" viewBox="0 0 24 24"><path d="m8.25 4.5 7.5 7.5-7.5 7.5" fill="none" stroke="#525252" stroke-width="2.5" stroke-linecap="round" stroke-linejoin="round"/></svg>
<div class="t" style="left:334.2px;top:725.0px;font-size:15px;color:#0b0b0b;font-weight:bold;letter-spacing:-0.18px;-webkit-text-stroke:0;">Miscellaneous (filler cab, ground clearance)</div>
<div class="r" style="left:979.4px;top:721.9px;width:25.6px;height:21.3px;background:rgba(255,255,255,0.28);border-radius:6px;"></div>
<div class="t" style="left:979.4px;top:721.9px;width:25.6px;height:21.3px;line-height:21.3px;text-align:center;font-size:14px;color:#2e3540;letter-spacing:0.5px;">2</div>
<div class="r" style="left:1019.5px;top:730.6px;width:3.5px;height:3.5px;background:#4a515c;border-radius:2px;"></div>
<div class="r" style="left:1026.5px;top:730.6px;width:3.5px;height:3.5px;background:#4a515c;border-radius:2px;"></div>
<div class="r" style="left:1033.5px;top:730.6px;width:3.5px;height:3.5px;background:#4a515c;border-radius:2px;"></div>
<div class="r" style="left:316.3px;top:761.3px;width:743.7px;height:31.2px;background:#c197d8;border-radius:7px;"></div>
<svg class="r" style="left:288.4px;top:770.4px;width:13.6px;height:13.6px;" viewBox="0 0 24 24"><path d="m8.25 4.5 7.5 7.5-7.5 7.5" fill="none" stroke="#525252" stroke-width="2.5" stroke-linecap="round" stroke-linejoin="round"/></svg>
<div class="t" style="left:334.2px;top:769.0px;font-size:15px;color:#0b0b0b;font-weight:bold;letter-spacing:-0.18px;-webkit-text-stroke:0;">Framework regulations</div>
<div class="r" style="left:979.4px;top:766.5px;width:25.6px;height:21.3px;background:rgba(255,255,255,0.28);border-radius:6px;"></div>
<div class="t" style="left:979.4px;top:766.5px;width:25.6px;height:21.3px;line-height:21.3px;text-align:center;font-size:14px;color:#2e3540;letter-spacing:0.5px;">7</div>
<div class="r" style="left:1019.5px;top:775.1px;width:3.5px;height:3.5px;background:#4a515c;border-radius:2px;"></div>
<div class="r" style="left:1026.5px;top:775.1px;width:3.5px;height:3.5px;background:#4a515c;border-radius:2px;"></div>
<div class="r" style="left:1033.5px;top:775.1px;width:3.5px;height:3.5px;background:#4a515c;border-radius:2px;"></div>
<div class="r" style="left:286.6px;top:545.2px;width:18.0px;height:18.2px;background:#eceef1;border-radius:4px;"></div>
<svg class="r" style="left:288.4px;top:547.6px;width:13.6px;height:13.6px;" viewBox="0 0 24 24"><path d="m8.25 4.5 7.5 7.5-7.5 7.5" fill="none" stroke="#525252" stroke-width="2.5" stroke-linecap="round" stroke-linejoin="round"/></svg>
<div class="r" style="left:316.5px;top:808.9px;width:743.5px;height:26.0px;background:#cccccc;border-radius:7px;"></div>
<svg class="r" style="left:287.9px;top:814.1px;width:14.5px;height:14.5px;" viewBox="0 0 24 24"><path d="m19.5 8.25-7.5 7.5-7.5-7.5" fill="none" stroke="#525252" stroke-width="2.3" stroke-linecap="round" stroke-linejoin="round"/></svg>
<div class="t" style="left:334.2px;top:813.0px;font-size:15px;color:#0b0b0b;font-weight:bold;letter-spacing:-0.18px;-webkit-text-stroke:0;">Regulations without groups</div>
<div class="r" style="left:1007.8px;top:810.2px;width:34.5px;height:22.8px;background:rgba(255,255,255,0.35);border-radius:7px;"></div>
<div class="t" style="left:1007.8px;top:810.2px;width:34.5px;height:22.8px;line-height:22.8px;text-align:center;font-size:14px;color:#2e3540;letter-spacing:0.5px;">57</div>
<svg class="r" style="left:299.7px;top:858.9px;width:13.75px;height:13.75px;" viewBox="0 0 24 24"><path d="m19.5 8.25-7.5 7.5-7.5-7.5" fill="none" stroke="#5e5e5e" stroke-width="2.1" stroke-linecap="round" stroke-linejoin="round"/></svg>
<div class="t" style="left:327.4px;top:859.0px;font-size:15px;color:#0b0b0b;font-weight:bold;letter-spacing:-0.25px;-webkit-text-stroke:0;">UNECE Agreements and Regulations</div>
<div class="r" style="left:1007.9px;top:855.7px;width:34.4px;height:20.9px;background:#e5e7eb;border-radius:7px;"></div>
<div class="t" style="left:1007.9px;top:855.7px;width:34.4px;height:20.9px;line-height:20.9px;text-align:center;font-size:14px;color:#2e3540;letter-spacing:0.5px;">14</div>
<div class="r" style="left:338.8px;top:902.5px;width:13.8px;height:13.9px;background:#94dba6;border-radius:7px;"></div>
<div class="t" style="left:361.6px;top:904.0px;font-size:14px;color:#111111;font-weight:normal;letter-spacing:0.30px;">UN GTR 9 - GTR 9 - Pedestrian safety</div>
<div class="r" style="left:338.8px;top:947.0px;width:13.8px;height:13.8px;background:#cfe2dc;border-radius:7px;"></div>
<div class="t" style="left:361.6px;top:948.0px;font-size:14px;color:#111111;font-weight:normal;letter-spacing:0.29px;">UN R94 - Frontal collision protection</div>
<svg class="r" style="left:288.0px;top:547.0px;width:26px;height:26px;" viewBox="0 0 26 26">
<path d="M9.2 13.5 L8.0 5.2 C7.8 3.8 8.8 2.9 9.9 2.8 C11.0 2.7 11.8 3.4 12.0 4.5 L12.9 9.5 C13.2 8.2 15.4 8.0 15.8 9.6 L16.0 10.0 C16.6 8.8 18.6 9.0 18.9 10.4 C19.6 9.6 21.6 10.0 22.0 11.5 L22.8 15.5 C23.0 18.0 21.5 21.0 19.8 23.2 L11.2 23.2 L4.8 14.8 C3.8 13.5 4.6 11.4 6.4 11.4 C7.4 11.4 8.4 12.3 9.2 13.5 Z" fill="#fff" stroke="#000" stroke-width="1.5" stroke-linejoin="round"/>
<path d="M13.4 15.2 L13.7 19.2 M16.0 15.0 L16.2 19.0 M18.5 15.0 L18.6 19.0" stroke="#000" stroke-width="1.1"/>
</svg>
<div class="t" style="left:1088.6px;top:376.0px;font-size:20px;color:#111827;font-weight:normal;letter-spacing:0.80px;-webkit-text-stroke:0.75px #111827;">Group Details</div>
<svg class="r" style="left:1829.0px;top:371.0px;width:16px;height:16px;" viewBox="0 0 24 24"><path d="M6 18 18 6M6 6l12 12" fill="none" stroke="#6b7280" stroke-width="1.5" stroke-linecap="round" stroke-linejoin="round"/></svg>
<div class="t" style="left:1088.6px;top:435.0px;font-size:17.5px;color:#5a616c;font-weight:normal;letter-spacing:0.80px;-webkit-text-stroke:0.45px #5a616c;">Name</div>
<div class="t" style="left:1137.6px;top:434.0px;font-size:19px;color:#e8333a;font-weight:normal;letter-spacing:0.00px;-webkit-text-stroke:0.6px #e8333a;">*</div>
<div class="t" style="left:1087.6px;top:479.0px;font-size:16px;color:#111827;font-weight:normal;letter-spacing:0.30px;">License plate / number plate / registration plate</div>
<div class="r" style="left:1088.0px;top:510.9px;width:758.0px;height:1.5px;background:#80858f;border-radius:0px;"></div>
<div class="t" style="left:1088.4px;top:546.0px;font-size:17.5px;color:#5a616c;font-weight:normal;letter-spacing:1.00px;-webkit-text-stroke:0.45px #5a616c;">Description</div>
<div class="t" style="left:1087.6px;top:589.0px;font-size:16px;color:#111827;font-weight:normal;letter-spacing:0.45px;">No description</div>
<div class="r" style="left:1088.0px;top:621.4px;width:758.0px;height:1.5px;background:#80858f;border-radius:0px;"></div>
<div class="t" style="left:1088.0px;top:638.0px;font-size:14px;color:#6b7280;font-weight:normal;letter-spacing:-0.50px;">PREVIEW OF COLOR</div>
<div class="r" style="left:1088.4px;top:663.2px;width:383.6px;height:32.3px;background:#fad68a;border-radius:9px;"></div>
<div class="t" style="left:1106.4px;top:672.0px;font-size:17px;color:#111111;font-weight:normal;letter-spacing:-0.12px;">License plate / number plate / registration plate</div>
<div class="r" style="left:1788.6px;top:722.8px;width:57.6px;height:38.1px;background:#08d4a1;border-radius:7px;"></div>
<div class="t" style="left:1803.2px;top:734.0px;font-size:16px;color:#0b0b0b;font-weight:normal;letter-spacing:0.10px;-webkit-text-stroke:0.6px #0b0b0b;">Edit</div>
</div>
</body></html>
